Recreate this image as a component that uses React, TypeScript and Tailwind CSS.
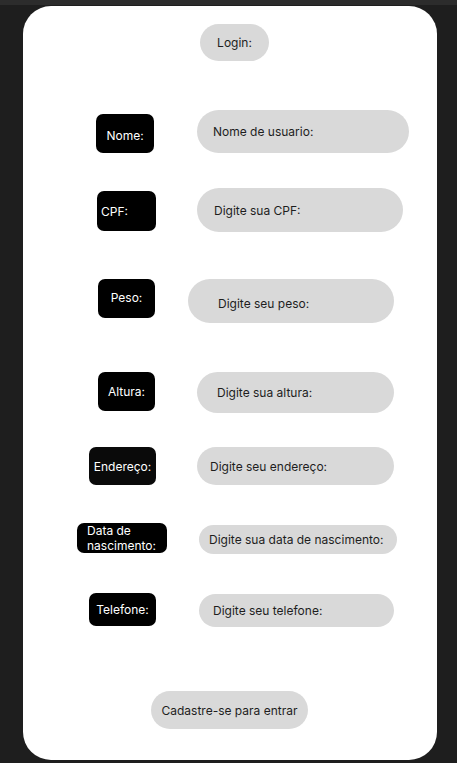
import React from "react";

const font = { fontFamily: "Inter, 'Noto Sans', sans-serif" };

export default function App() {
  return (
    <div className="w-[457px] h-[763px] bg-[#1e1e1e] overflow-hidden" style={font}>
      <div className="h-[5px] bg-[#2c2c2c]" />
      <div className="mt-[1px] ml-[23px] w-[414px] h-[754px] bg-white rounded-[28px] flex flex-col text-[12px] leading-[15px] whitespace-nowrap">
        {/* Login */}
        <div className="mt-[18px] ml-[177px] w-[69px] h-[37px] rounded-full bg-[#d9d9d9] flex items-center justify-center text-[#1e1e1e]">
          Login:
        </div>

        {/* Nome */}
        <div className="mt-[49px] flex items-start">
          <div className="mt-[4px] ml-[73px] w-[58px] h-[39px] rounded-[7px] bg-black text-white flex items-center justify-center pt-[3px]">
            Nome:
          </div>
          <div className="ml-[43px] w-[212px] h-[43px] rounded-full bg-[#d9d9d9] text-[#1e1e1e] flex items-center pl-[16px]">
            Nome de usuario:
          </div>
        </div>

        {/* CPF */}
        <div className="mt-[35px] flex items-start">
          <div className="mt-[3px] ml-[74px] w-[59px] h-[40px] rounded-[7px] bg-black text-white flex items-center pl-[4px] pt-[1px]">
            CPF:
          </div>
          <div className="ml-[41px] w-[206px] h-[44px] rounded-full bg-[#d9d9d9] text-[#1e1e1e] flex items-center pl-[17px] pt-[1px]">
            Digite sua CPF:
          </div>
        </div>

        {/* Peso */}
        <div className="mt-[47px] flex items-start">
          <div className="ml-[75px] w-[57px] h-[39px] rounded-[7px] bg-black text-white flex items-center justify-center pb-[3px]">
            Peso:
          </div>
          <div className="ml-[33px] w-[206px] h-[44px] rounded-full bg-[#d9d9d9] text-[#1e1e1e] flex items-center pl-[30px] pt-[4px]">
            Digite seu peso:
          </div>
        </div>

        {/* Altura */}
        <div className="mt-[49px] flex items-start">
          <div className="ml-[75px] w-[57px] h-[39px] rounded-[7px] bg-black text-white flex items-center justify-center">
            Altura:
          </div>
          <div className="ml-[42px] w-[197px] h-[41px] rounded-full bg-[#d9d9d9] text-[#1e1e1e] flex items-center pl-[20px]">
            Digite sua altura:
          </div>
        </div>

        {/* Endereço */}
        <div className="mt-[34px] flex items-start">
          <div className="ml-[66px] w-[67px] h-[38px] rounded-[7px] bg-[#0a0a0a] text-white flex items-center justify-center">
            Endereço:
          </div>
          <div className="ml-[41px] w-[197px] h-[38px] rounded-full bg-[#d9d9d9] text-[#1e1e1e] flex items-center pl-[13px]">
            Digite seu endereço:
          </div>
        </div>

        {/* Data de nascimento */}
        <div className="mt-[38px] flex items-start">
          <div className="ml-[54px] w-[90px] h-[30px] rounded-[7px] bg-black text-white flex flex-col justify-center pl-[10px] leading-[15px]">
            <span>Data de</span>
            <span>nascimento:</span>
          </div>
          <div className="mt-[2px] ml-[32px] w-[198px] h-[29px] rounded-full bg-[#d9d9d9] text-[#1e1e1e] flex items-center pl-[10px]">
            Digite sua data de nascimento:
          </div>
        </div>

        {/* Telefone */}
        <div className="mt-[39px] flex items-start">
          <div className="ml-[66px] w-[67px] h-[33px] rounded-[7px] bg-black text-white flex items-center justify-center">
            Telefone:
          </div>
          <div className="mt-[1px] ml-[43px] w-[195px] h-[33px] rounded-full bg-[#d9d9d9] text-[#1e1e1e] flex items-center pl-[14px]">
            Digite seu telefone:
          </div>
        </div>

        {/* Cadastre */}
        <div className="mt-[64px] ml-[128px] w-[157px] h-[38px] rounded-full bg-[#d9d9d9] text-[#1e1e1e] flex items-center justify-center">
          Cadastre-se para entrar
        </div>
      </div>
    </div>
  );
}
